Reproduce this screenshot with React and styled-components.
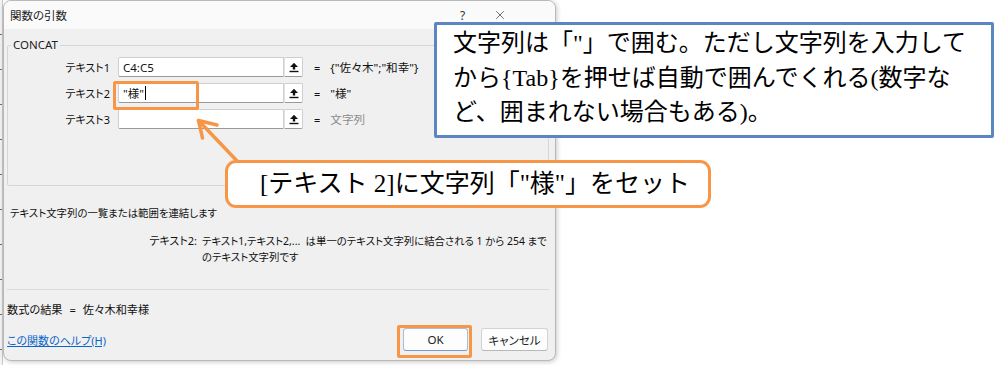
import { styled, createGlobalStyle } from "styled-components";
import { X } from "lucide-react";

const GlobalStyle = createGlobalStyle`
  html, body {
    margin: 0;
    padding: 0;
    background: #ffffff;
  }
  body {
    font-family: "Noto Sans", "Noto Sans CJK JP", sans-serif;
  }
`;

const ORANGE = "#f79646";
const BLUE = "#5a86c2";

const Stage = styled.div`
  position: relative;
  width: 997px;
  height: 365px;
  overflow: hidden;
  display: flex;
  align-items: flex-start;
  background: #ffffff;
`;

const SheetEdge = styled.div`
  width: 3px;
  height: 365px;
  border-right: 1px solid #c9c9c9;
  box-sizing: border-box;
  background: repeating-linear-gradient(
    to bottom,
    #f3f3f3 0px,
    #f3f3f3 34px,
    #6f6f6f 34px,
    #6f6f6f 35px
  );
`;

const Dialog = styled.div`
  width: 553px;
  height: 361px;
  box-sizing: border-box;
  border: 1px solid #b9b9b9;
  border-radius: 8px;
  background: #f0f0f0;
  box-shadow: 1px 1px 5px rgba(0, 0, 0, 0.22);
  display: flex;
  flex-direction: column;
  overflow: hidden;
  font-size: 10.4px;
  color: #111;
  font-feature-settings: "palt";
`;

const TitleBar = styled.div`
  height: 28px;
  flex: none;
  display: flex;
  align-items: center;
  justify-content: space-between;
  background: #fafafa;
  padding-left: 6px;
`;

const Title = styled.span`
  font-size: 11.5px;
  color: #222;
`;

const TitleButtons = styled.div`
  display: flex;
  align-items: center;
  padding-right: 37px;
`;

const TitleBtn = styled.span`
  width: 37px;
  display: flex;
  justify-content: center;
  align-items: center;
  font-size: 12px;
  color: #333;
`;

const Body = styled.div`
  flex: 1;
  display: flex;
  flex-direction: column;
  padding: 0 6px 6px 3px;
`;

const Group = styled.fieldset`
  margin: 9px 0 0 0;
  padding: 5px 0 56px 0;
  min-width: 0;
  border: 1px solid #d6d6d6;
  border-radius: 2px;
  display: flex;
  flex-direction: column;
  gap: 6px;
`;

const Legend = styled.legend`
  margin-left: 3px;
  padding: 0 2px;
  line-height: 14px;
  font-size: 11.5px;
  color: #222;
`;

const Row = styled.div`
  display: flex;
  align-items: center;
  height: 20px;
`;

const ArgLabel = styled.span`
  width: 102px;
  flex: none;
  text-align: right;
  font-size: 11px;
`;

const ArgInput = styled.div`
  height: 20px;
  box-sizing: border-box;
  margin-left: 8px;
  width: 166px;
  flex: none;
  background: #fff;
  border: 1px solid #cfcfcf;
  border-bottom-color: #9a9a9a;
  border-radius: 2px 0 0 2px;
  display: flex;
  align-items: center;
  padding-left: 4px;
  font-size: 11.5px;
  color: #111;
`;

const Caret = styled.span`
  display: inline-block;
  width: 1px;
  height: 14px;
  margin-left: 1px;
  background: #000;
`;

const RefButton = styled.div`
  width: 19px;
  height: 20px;
  flex: none;
  box-sizing: border-box;
  background: #fff;
  border: 1px solid #cfcfcf;
  border-left-color: #e2e2e2;
  border-bottom-color: #9a9a9a;
  border-radius: 0 2px 2px 0;
  display: flex;
  align-items: center;
  justify-content: center;
`;

const Equals = styled.span`
  margin-left: 11px;
  font-size: 11px;
`;

const ArgValue = styled.span`
  margin-left: 10px;
  font-size: 11.6px;
  color: ${(p) => (p.$muted ? "#8c8c8c" : "#111")};
  white-space: nowrap;
`;

const Summary = styled.div`
  margin-top: 19px;
  padding-left: 3px;
  line-height: 16px;
`;

const ArgHelp = styled.div`
  margin-top: 12px;
  display: grid;
  grid-template-columns: 190px 1fr;
  column-gap: 5px;
  line-height: 16px;
  white-space: nowrap;
`;

const ArgHelpName = styled.span`
  text-align: right;
  font-size: 11px;
`;

const Divider = styled.div`
  margin-top: 24px;
  height: 1px;
  background: #dadada;
`;

const Result = styled.div`
  margin-top: 12px;
  line-height: 16px;
  font-size: 11.2px;
  word-spacing: 4px;
`;

const Footer = styled.div`
  margin-top: 10px;
  display: flex;
  align-items: center;
  justify-content: space-between;
`;

const HelpLink = styled.a`
  color: #0a66c8;
  text-decoration: underline;
  font-size: 11px;
  cursor: pointer;
`;

const Buttons = styled.div`
  display: flex;
  gap: 13px;
  padding-right: 1px;
`;

const DlgButton = styled.button`
  width: ${(p) => p.$w}px;
  height: 23px;
  box-sizing: border-box;
  background: #fdfdfd;
  border: 1px solid ${(p) => (p.$primary ? "#a9bdd6" : "#d3d3d3")};
  border-bottom-color: ${(p) => (p.$primary ? "#7a9cc6" : "#b8b8b8")};
  border-radius: 3px;
  font-family: "Noto Sans", "Noto Sans CJK JP", sans-serif;
  font-feature-settings: "palt";
  font-size: 11.5px;
  color: #1a1a1a;
  padding: 0;
`;

const Callout = styled.div`
  position: absolute;
  left: ${(p) => p.$x}px;
  top: ${(p) => p.$y}px;
  width: ${(p) => p.$w}px;
  height: ${(p) => p.$h}px;
  box-sizing: border-box;
  background: #ffffff;
  border: 3px solid ${(p) => (p.$tone === "blue" ? BLUE : ORANGE)};
  border-radius: ${(p) => (p.$tone === "blue" ? "2px" : "11px")};
  font-family: "Liberation Serif", "Noto Sans CJK JP", serif;
  color: #000;
  white-space: nowrap;
`;

const NoteText = styled.div`
  padding: 1px 0 0 16px;
  font-size: 24px;
  line-height: 34.5px;
`;

const TagText = styled.div`
  padding-left: 32px;
  font-size: 25px;
  line-height: 41px;
`;

const Highlight = styled.div`
  position: absolute;
  left: ${(p) => p.$x}px;
  top: ${(p) => p.$y}px;
  width: ${(p) => p.$w}px;
  height: ${(p) => p.$h}px;
  box-sizing: border-box;
  border: 3px solid ${ORANGE};
  border-radius: 2px;
  pointer-events: none;
`;

const ArrowSvg = styled.svg`
  position: absolute;
  left: 190px;
  top: 112px;
`;

function RefIcon() {
  return (
    <svg width="10" height="11" viewBox="0 0 10 11">
      <path d="M5 0.8 L9 5 H6.2 V7.4 H3.8 V5 H1 Z" fill="#111" />
      <rect x="0.5" y="8.8" width="9" height="1.4" fill="#111" />
    </svg>
  );
}

function ArgRow({ label, children, value, muted }) {
  return (
    <Row>
      <ArgLabel>{label}</ArgLabel>
      <ArgInput>{children}</ArgInput>
      <RefButton>
        <RefIcon />
      </RefButton>
      <Equals>=</Equals>
      <ArgValue $muted={muted}>{value}</ArgValue>
    </Row>
  );
}

export default function App() {
  return (
    <>
      <GlobalStyle />
      <Stage>
        <SheetEdge />
        <Dialog>
          <TitleBar>
            <Title>関数の引数</Title>
            <TitleButtons>
              <TitleBtn>?</TitleBtn>
              <TitleBtn>
                <X size={14} strokeWidth={1.2} />
              </TitleBtn>
            </TitleButtons>
          </TitleBar>

          <Body>
            <Group>
              <Legend>CONCAT</Legend>
              <ArgRow label="テキスト1" value={'{"佐々木";"和幸"}'}>
                C4:C5
              </ArgRow>
              <ArgRow label="テキスト2" value={'"様"'}>
                "様"
                <Caret />
              </ArgRow>
              <ArgRow label="テキスト3" value="文字列" muted />
            </Group>

            <Summary>テキスト文字列の一覧または範囲を連結します</Summary>

            <ArgHelp>
              <ArgHelpName>テキスト2:</ArgHelpName>
              <span>
                テキスト1,テキスト2,...&nbsp;&nbsp;は単一のテキスト文字列に結合される 1 から 254 まで
                <br />
                のテキスト文字列です
              </span>
            </ArgHelp>

            <Divider />

            <Result>数式の結果 = 佐々木和幸様</Result>

            <Footer>
              <HelpLink>この関数のヘルプ(H)</HelpLink>
              <Buttons>
                <DlgButton $w={65} $primary>
                  OK
                </DlgButton>
                <DlgButton $w={67}>キャンセル</DlgButton>
              </Buttons>
            </Footer>
          </Body>
        </Dialog>

        <Highlight $x={113} $y={81} $w={86} $h={29} />
        <Highlight $x={397} $y={325} $w={75} $h={33} />

        <ArrowSvg width="60" height="52" viewBox="0 0 60 52">
          <g
            stroke={ORANGE}
            strokeWidth="3.5"
            strokeLinecap="round"
            strokeLinejoin="round"
            fill="none"
          >
            <line x1="8.5" y1="8.5" x2="48" y2="50" />
            <polyline points="27,13 8.5,8.5 12.5,26" />
          </g>
        </ArrowSvg>

        <Callout $tone="orange" $x={225} $y={160} $w={486} $h={48}>
          <TagText>[テキスト 2]に文字列「"様"」をセット</TagText>
        </Callout>

        <Callout $tone="blue" $x={434} $y={22} $w={560} $h={116}>
          <NoteText>
            文字列は「"」で囲む。ただし文字列を入力して
            <br />
            から{"{"}Tab{"}"}を押せば自動で囲んでくれる(数字な
            <br />
            ど、囲まれない場合もある)。
          </NoteText>
        </Callout>
      </Stage>
    </>
  );
}
